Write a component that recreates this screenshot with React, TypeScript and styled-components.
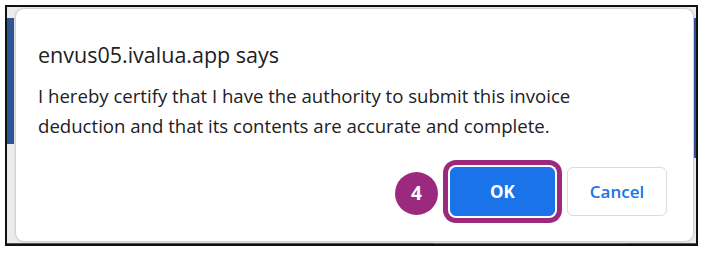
import React from 'react';
import styled, { createGlobalStyle } from 'styled-components';

const GlobalStyle = createGlobalStyle`
  html, body {
    margin: 0;
    padding: 0;
    background: #ffffff;
  }
  body {
    font-family: "Open Sans", "Noto Sans", "Liberation Sans", sans-serif;
  }
`;

const Frame = styled.div`
  box-sizing: border-box;
  margin: 5px 0 0 5px;
  width: 693px;
  height: 241px;
  border: 2px solid #111111;
  padding: 2px 3px 3px 9px;
  display: flex;
  background:
    linear-gradient(#2f5597, #2f5597) 0 11px / 7px 126px no-repeat,
    linear-gradient(#2f5597, #2f5597) right 0 top 11px / 2px 140px no-repeat,
    linear-gradient(90deg, #2f5597 0 62%, #3a8a3a 62% 90%, #c0282d 90%) left bottom / 100% 1px no-repeat,
    #ececec;
`;

const Dialog = styled.div`
  flex: 1;
  display: flex;
  flex-direction: column;
  background: #ffffff;
  border-radius: 8px;
  box-shadow: 0 0 3px rgba(0, 0, 0, 0.3);
  padding: 30px 26px 25px 22px;
`;

const Title = styled.div`
  font-size: 21.5px;
  line-height: 31px;
  color: #202124;
`;

const Message = styled.div`
  margin-top: 11px;
  font-size: 18.6px;
  line-height: 30px;
  color: #202124;
`;

const Actions = styled.div`
  margin-top: auto;
  display: flex;
  align-items: center;
  justify-content: flex-end;
  gap: 12px;
`;

const StepBadge = styled.div`
  width: 43px;
  height: 43px;
  border-radius: 50%;
  background: #9b2a7f;
  color: #ffffff;
  display: flex;
  align-items: center;
  justify-content: center;
  font-weight: 700;
  font-size: 19px;
  margin-top: 3px;
`;

const Button = styled.button<{ $primary?: boolean }>`
  box-sizing: border-box;
  height: 49px;
  padding: 0;
  border-radius: 6px;
  font-family: inherit;
  font-size: 17px;
  font-weight: ${p => (p.$primary ? 700 : 600)};
  cursor: pointer;
  border: 1px solid ${p => (p.$primary ? '#1a73e8' : '#dadce0')};
  background: ${p => (p.$primary ? '#1a73e8' : '#ffffff')};
  color: ${p => (p.$primary ? '#ffffff' : '#1a73e8')};
`;

const OkButton = styled(Button)`
  width: 105px;
  box-shadow: 0 0 0 2px #ffffff, 0 0 0 7px #9b2a7f;
`;

const CancelButton = styled(Button)`
  width: 100px;
`;

export default function App() {
  return (
    <>
      <GlobalStyle />
      <Frame>
        <Dialog>
          <Title>envus05.ivalua.app says</Title>
          <Message>
            I hereby certify that I have the authority to submit this invoice
            <br />
            deduction and that its contents are accurate and complete.
          </Message>
          <Actions>
            <StepBadge>4</StepBadge>
            <OkButton $primary>OK</OkButton>
            <CancelButton>Cancel</CancelButton>
          </Actions>
        </Dialog>
      </Frame>
    </>
  );
}
